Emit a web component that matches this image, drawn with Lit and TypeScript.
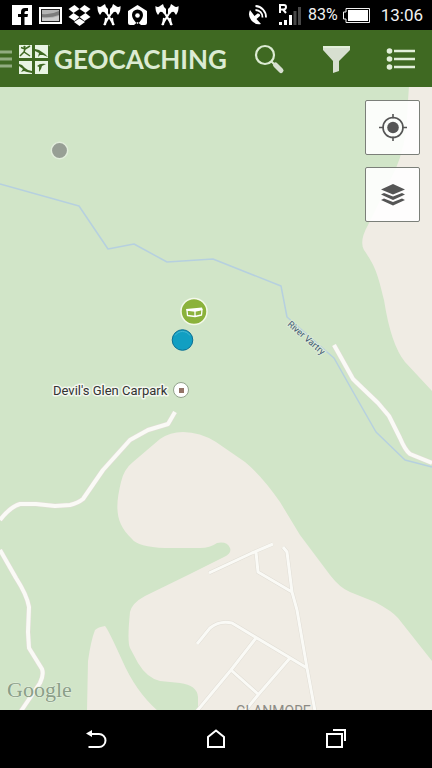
import { LitElement, html, css, svg } from "lit";
import { customElement } from "lit/decorators.js";

const axes = svg`
  <path d="M6 5L17 23M18 5L7 23" stroke="#fff" stroke-width="2"/>
  <path d="M0.500 4Q3 6 5 4L8 2L9 5L11 7V11L9 12Q7 9 5 10L3 13Q0 9 0.500 4Z" fill="#fff"/>
  <path d="M23.500 4Q21 6 19 4L16 2L15 5L13 7V11L15 12Q17 9 19 10L21 13Q24 9 23.500 4Z" fill="#fff"/>
  <path d="M9 16L8 23M15 16L16 23" stroke="#fff" stroke-width="2"/>`;

@customElement("status-bar")
export class StatusBar extends LitElement {
  static styles = css`
    :host {
      display: flex;
      align-items: center;
      height: 30px;
      padding: 0 9px 0 10px;
      background: #000;
      color: #f2f2f2;
      font-family: Roboto, sans-serif;
    }
    svg { display: block; flex: none; fill: none; }
    .notices { display: flex; gap: 5px; flex: 1; }
    .system { display: flex; align-items: center; }
    .signal { margin-left: 8px; }
    .charge { margin: 0 4px 0 6px; font-size: 16px; line-height: 20px; }
    .clock { margin-left: 11px; font-size: 17px; line-height: 20px; }
  `;
  render() {
    return html`
      <div class="notices">
        <svg width="24" height="26" viewBox="0 0 24 26" role="img" aria-label="Facebook">
          <path d="M2 3H22V23H2Z" fill="#fff"/>
          <path d="M11 23V15H8V12H11V10Q11 6 15 6H18V9H16Q14.500 9 14.500 10.500V12H18L17.500 15H14.500V23Z" fill="#000"/>
        </svg>
        <svg width="24" height="26" viewBox="0 0 24 26" role="img" aria-label="Picture">
          <rect x="0" y="5" width="23" height="17" fill="#fff"/>
          <rect x="2" y="7" width="19" height="13" fill="#222"/>
          <rect x="3" y="8" width="17" height="11" fill="#b4b4b4"/>
          <path d="M3 12Q12 13 20 9V13Q12 16 3 15Z" fill="#7c7c7c"/>
          <path d="M3 16Q12 17 20 14V19H3Z" fill="#ccc"/>
        </svg>
        <svg width="24" height="26" viewBox="0 0 24 26" role="img" aria-label="Dropbox">
          <path d="M6.500 3L11.500 7L5.500 11L0.500 7Z M16.500 3L22.500 7L17.500 11L11.500 7Z M5.500 11L11.500 15L6.500 19L0.500 15Z M17.500 11L22.500 15L16.500 19L11.500 15Z M11.500 16.500L17 20L11.500 24L6 20Z" fill="#fff"/>
        </svg>
        <svg width="24" height="26" viewBox="0 0 24 26" role="img" aria-label="Game">${axes}</svg>
        <svg width="24" height="26" viewBox="0 0 24 26" role="img" aria-label="Home location">
          <path fill-rule="evenodd" d="M11.500 3L21 9V21Q21 23 19 23H15L11.500 20L8 23H4Q2 23 2 21V9Z M11.500 7.500A5.500 5.500 0 0 0 6 13Q6 17 11.500 22Q17 17 17 13A5.500 5.500 0 0 0 11.500 7.500Z" fill="#fff"/>
          <circle cx="11.500" cy="13.500" r="2.300" fill="#fff"/>
        </svg>
        <svg width="24" height="26" viewBox="0 0 24 26" role="img" aria-label="Game">${axes}</svg>
      </div>
      <div class="system">
        <svg width="24" height="26" viewBox="0 0 24 26" role="img" aria-label="Location in use">
          <path d="M4 8A10 10 0 0 0 15 22L10.500 17L14 14A2 2 0 0 0 11.500 11.500L8.500 14Z" fill="#fff"/>
          <path d="M9.500 8A7 7 0 0 1 16.500 15.500" stroke="#fff" stroke-width="1.800"/>
          <path d="M9.500 4A11 11 0 0 1 20 15.500" stroke="#fff" stroke-width="1.800"/>
        </svg>
        <svg class="signal" width="24" height="26" viewBox="0 0 24 26" role="img" aria-label="Roaming signal">
          <path d="M2 11V3H6Q8 3 8 5T6 7.500H2 M5 7.500L8 11" stroke="#fff" stroke-width="2"/>
          <path d="M1 20H4V23H1Z M6 18H9V23H6Z M11 13H14V23H11Z" fill="#fff"/>
          <path d="M15.500 9H18.500V23H15.500Z M20 5H23V23H20Z" fill="#484848"/>
        </svg>
        <span class="charge">83%</span>
        <svg width="28" height="26" viewBox="0 0 28 26" role="img" aria-label="Battery">
          <path d="M4 6.500H27.500V20.500H4V17H1.500V10H4Z" stroke="#f2f2f2"/>
          <rect x="6" y="8" width="20" height="11" fill="#fff"/>
        </svg>
        <time class="clock">13:06</time>
      </div>`;
  }
}

@customElement("app-header")
export class AppHeader extends LitElement {
  static styles = css`
    :host {
      display: flex;
      align-items: center;
      justify-content: space-between;
      height: 57px;
      background: #3f6922;
      color: #dcebd3;
    }
    svg { display: block; flex: none; fill: none; }
    button {
      border: 0;
      padding: 0;
      background: none;
      color: inherit;
      cursor: pointer;
    }
    .brand { display: flex; align-items: center; height: 57px; }
    .mark { margin: 0 4px 0 6px; }
    .name { font: 700 26px/32px Lato, sans-serif; }
    .actions { display: flex; gap: 4px; }
    .action {
      display: flex;
      align-items: center;
      justify-content: center;
      width: 62px;
      height: 57px;
    }
  `;
  render() {
    return html`
      <button class="brand" aria-label="Open menu, Geocaching">
        <svg width="12" height="18" viewBox="0 0 12 18">
          <path d="M0 2H12M0 9H12M0 16H12" stroke="#91ac80" stroke-width="3"/>
        </svg>
        <svg class="mark" width="32" height="30" viewBox="0 0 32 30">
          <path d="M1 1H14V14H1Z M17 1H30V14H17Z M1 17H14V30H1Z M17 17H30V30H17Z" fill="#e9f5e4"/>
          <path d="M2 12L6 8L12 12M6 8L7 5L3 3.500M7 5L12 2" stroke="#3f6922" stroke-width="1.500"/>
          <circle cx="6.500" cy="3" r="1.200" fill="#3f6922"/>
          <g fill="#3f6922">
            <path d="M17 5L21 6L24 8L27 10L30 13L25 11L22 11L20 13L21 9L17 7Z"/>
            <path d="M1 20L4 21L7 24L10 26L14 27V29L9 28L6 27L3 28L5 25L1 22Z"/>
            <path d="M19 22Q22 19 28 20L24 22L23 25L21 28L21 23Z"/>
          </g>
          <circle cx="31.200" cy="1.500" r="0.700" fill="#9cb88c"/>
        </svg>
        <span class="name">GEOCACHING</span>
      </button>
      <div class="actions">
        <button class="action" aria-label="Search">
          <svg width="32" height="32" viewBox="0 0 32 32">
            <circle cx="12" cy="12" r="9" stroke="currentColor" stroke-width="2.200"/>
            <path d="M18 18L22 22" stroke="currentColor" stroke-width="2"/>
            <path d="M22.500 22L28 27.500" stroke="#d7dfd0" stroke-width="5" stroke-linecap="round"/>
          </svg>
        </button>
        <button class="action" aria-label="Filter">
          <svg width="30" height="30" viewBox="0 0 30 30">
            <path d="M3 2H30V6L19 17V27L13 29V17L3 6Z" fill="#d7dfd0"/>
            <path d="M3 2H30V4H3Z" fill="#e2efda"/>
          </svg>
        </button>
        <button class="action" aria-label="List">
          <svg width="30" height="26" viewBox="0 0 30 26">
            <g fill="#e2efda"><circle cx="3.500" cy="5" r="2.800"/><circle cx="3.500" cy="13" r="2.800"/><circle cx="3.500" cy="21" r="2.800"/></g>
            <path d="M8 5H29M8 13H29M8 21H29" stroke="#e2efda" stroke-width="2.600"/>
          </svg>
        </button>
      </div>`;
  }
}

@customElement("map-view")
export class MapView extends LitElement {
  static styles = css`
    :host {
      position: relative;
      display: block;
      overflow: hidden;
      background: #d1e5c8;
    }
    .canvas { position: absolute; inset: 0; width: 100%; height: 100%; fill: none; }
    .land { fill: #f0ece4; }
    .river { stroke: #b6d0df; stroke-width: 1.5; stroke-linejoin: round; }
    .edge { stroke: #e0ddd5; stroke-linejoin: round; }
    .road { stroke: #fafaf6; stroke-linejoin: round; }
    .wide .edge { stroke-width: 5; }
    .wide .road { stroke-width: 4; }
    .thin .edge { stroke-width: 4; }
    .thin .road { stroke-width: 3; }
    .place, .water, .town { font-family: Roboto, sans-serif; }
    .place { font-size: 13px; fill: #333; stroke: #f2f7ee; stroke-width: 3px; paint-order: stroke; stroke-linejoin: round; }
    .water { font-size: 9px; fill: #3f5874; stroke: #dcebd6; stroke-width: 2px; paint-order: stroke; }
    .town { font-size: 14px; fill: #8c8b85; }
    .credit { font-family: "Liberation Serif", serif; font-size: 22px; fill: #8b9f88; stroke: #e6f0e1; stroke-width: 1px; paint-order: stroke; }
    .tools { position: absolute; top: 13px; right: 12px; display: grid; gap: 12px; }
    .tool {
      display: grid;
      place-items: center;
      width: 55px;
      height: 55px;
      padding: 0;
      border: 1px solid #7b7f79;
      border-radius: 2px;
      background: rgb(255 255 255 / 90%);
      cursor: pointer;
    }
    .tool svg { display: block; fill: none; }
  `;
  render() {
    const wide = "M175 412L168 424L148 430L130 440L103 470L83 499Q78 503 70 505L55 506L36 504L20 504Q10 507 0 520M0 550L16 578Q27 595 29 607L28 632L29 648L42 669Q44 675 40 683L21 711M334 345L353 379Q358 384 378 403L389 416L400 438Q405 450 410 454L432 463";
    const thin = "M209 573L252 553L273 544M256 552L258 572L292 592M283 547L287 552L292 592L297 610L307 668L315 711M197 644L210 628Q220 620 232 623L307 668M256 638L231 670L197 711M290 658L258 695L245 711M231 670L258 694";
    return html`
      <svg class="canvas" viewBox="0 87 432 623" preserveAspectRatio="xMidYMid slice" role="img" aria-label="Map">
        <g class="land">
          <path d="M409 86L406 130Q402 160 390 180L368 225Q359 241 364 250C374 265 377 270 384 300Q391 345 405 362L432 391V86Z"/>
          <path d="M183 432Q200 432 216 442L245 462Q262 476 280 502L300 535L330 575Q340 588 350 592L375 602Q392 611 398 618L432 661V711H198V697Q197 685 180 683L160 681Q147 678 138 663L130 648Q127 642 130 612Q132 603 145 596L190 574L224 557Q232 553 230 548Q227 541 217 543Q210 548 200 548H165Q138 547 132 539C115 523 115 507 121 482Q124 469 133 462L160 439Q170 432 183 432Z"/>
          <path d="M87 711L88 661Q91 640 95 630Q98 627 105 626Q108 629 122 660Q136 692 158 711Z"/>
        </g>
        <path class="river" d="M0 184L79 206L108 249L134 244L167 262L213 259L281 286L287 317L327 352L334 358L352 390L376 432L405 460L432 467"/>
        <g class="wide"><path class="edge" d=${wide}/><path class="road" d=${wide}/></g>
        <g class="thin"><path class="edge" d=${thin}/><path class="road" d=${thin}/></g>

        <text class="town" x="236" y="716">GLANMORE</text>
        <text class="water" transform="translate(287 325) rotate(41)">River Vartry</text>
        <text class="place" x="53" y="395">Devil's Glen Carpark</text>
        <text class="credit" x="7" y="697">Google</text>

        <circle cx="59.500" cy="150.500" r="8.200" fill="#979f95" stroke="#e2eedc" stroke-width="1.500"/>
        <g>
          <circle cx="181" cy="390" r="7.500" fill="#fff" stroke="#93a38d"/>
          <rect x="179" y="388" width="5" height="5" fill="#937467"/>
        </g>
        <g>
          <circle cx="194" cy="311.500" r="13" fill="#8bb23b" stroke="#f4f9ea" stroke-width="1.500"/>
          <path d="M186 309L202 307.500L202.500 309.500L195 311L186.500 310.500Z" fill="#fff"/>
          <path d="M187 310L195 311V316.500L187.500 315.500ZM195 311L202 309.500L201.500 315L195 316.500Z" stroke="#fff" stroke-width="1.300" stroke-linejoin="round"/>
        </g>
        <g>
          <circle cx="182.500" cy="340" r="10.300" fill="#119fc2" stroke="#0b6f93"/>
          <path d="M175 335.500A9 9 0 0 1 190 335.500" stroke="#45b8d4"/>
        </g>
      </svg>
      <div class="tools">
        <button class="tool" aria-label="My location">
          <svg width="28" height="28" viewBox="0 0 28 28">
            <circle cx="14" cy="13.500" r="10" stroke="#555" stroke-width="1.600"/>
            <circle cx="14" cy="13.500" r="5.800" fill="#555"/>
            <path d="M14 0V4.500M14 22.500V27M0 13.500H5M23 13.500H28" stroke="#555" stroke-width="1.600"/>
          </svg>
        </button>
        <button class="tool" aria-label="Map layers">
          <svg width="28" height="24" viewBox="0 0 28 24">
            <path d="M14 1L26 6.500L14 11.500L2 6.500Z M5 10L14 13.500L23 10L26 11.500L14 17L2 11.500Z M5 15.500L14 19L23 15.500L26 17L14 22.500L2 17Z" fill="#555"/>
          </svg>
        </button>
      </div>`;
  }
}

@customElement("nav-bar")
export class NavBar extends LitElement {
  static styles = css`
    :host { display: flex; justify-content: center; height: 58px; background: #000; }
    button {
      display: grid;
      place-items: center;
      flex: 0 1 120px;
      padding: 0;
      border: 0;
      background: none;
      cursor: pointer;
    }
    svg { display: block; fill: none; stroke: #fff; stroke-width: 2; }
  `;
  render() {
    return html`
      <button aria-label="Back">
        <svg width="22" height="22" viewBox="0 0 22 22">
          <path d="M5 6H14A6.500 6.500 0 0 1 14 19H3.500"/>
          <path d="M1 5.500L7 2V9Z" fill="#fff" stroke="none"/>
        </svg>
      </button>
      <button aria-label="Home">
        <svg width="22" height="22" viewBox="0 0 22 22"><path d="M3 19V9L11 2.500L19 9V19Z"/></svg>
      </button>
      <button aria-label="Recent apps">
        <svg width="22" height="22" viewBox="0 0 22 22"><path d="M2 6H17V19H2Z M8 2H20V13"/></svg>
      </button>`;
  }
}

@customElement("app-root")
export class AppRoot extends LitElement {
  static styles = css`
    :host { display: flex; flex-direction: column; min-height: 100vh; background: #000; }
    .map { flex: 1; }
  `;
  render() {
    return html`
      <status-bar></status-bar>
      <app-header></app-header>
      <map-view class="map"></map-view>
      <nav-bar></nav-bar>`;
  }
}
